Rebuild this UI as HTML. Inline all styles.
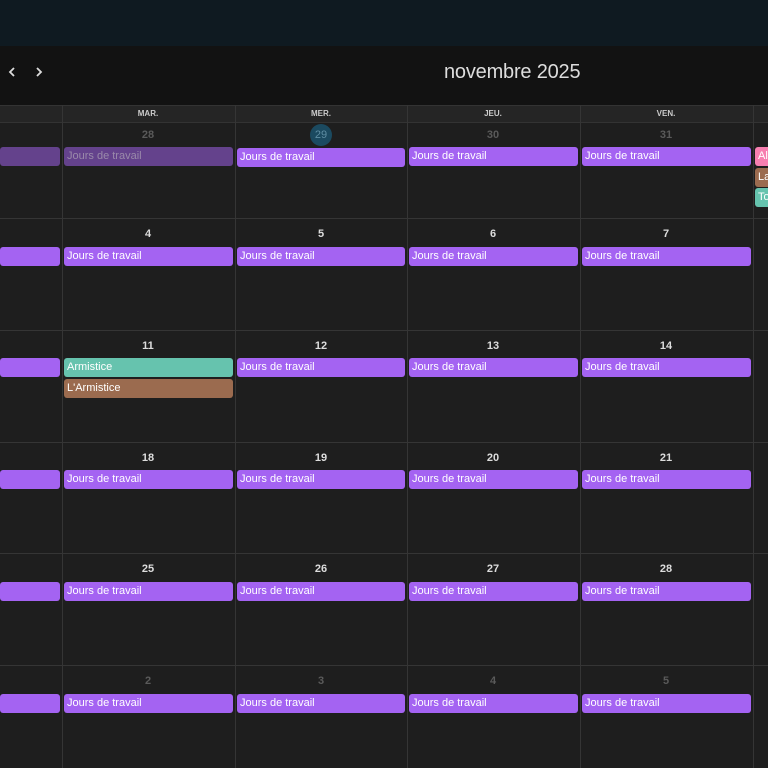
<!DOCTYPE html><html><head><meta charset="utf-8"><style>
*{margin:0;padding:0;box-sizing:border-box}
body{width:768px;height:768px;overflow:hidden;background:#1e1e1e;font-family:"Liberation Sans",sans-serif;position:relative}
.a{position:absolute}
.top{left:0;top:0;width:768px;height:46px;background:#0f1a21}
.hdr{left:0;top:46px;width:768px;height:59px;background:#121212}
.dh{left:0;top:105px;width:768px;height:18px;background:#252525;border-top:1px solid #333;border-bottom:1px solid #333}
.vl{top:105px;width:1px;height:663px;background:#353535}
.hl{left:0;width:768px;height:1px;background:#353535}
.dn{font-size:8px;font-weight:bold;color:#ccc;width:172px;text-align:center}
.n{font-size:11px;color:#ddd;width:172px;text-align:center;font-weight:bold}
.n.o{color:#5a5a5a}
.e{height:19px;border-radius:3px;background:#a463f2;color:#fff;font-size:11px;line-height:19px;padding-left:3px;white-space:nowrap;overflow:hidden}
</style></head><body>
<div class="a top"></div>
<div class="a hdr"></div>
<svg class="a" style="left:5px;top:64px" width="40" height="16"><path d="M9 4 L5 8 L9 12" stroke="#ddd" stroke-width="1.8" fill="none"/><path d="M36 4 L40 8 L36 12" stroke="#ddd" stroke-width="1.8" fill="none" transform="translate(-4 0)"/></svg>
<div class="a" style="left:444px;top:61px;font-size:20px;color:#ddd;letter-spacing:-0.2px">novembre 2025</div>
<div class="a dh"></div>
<div class="a dn" style="left:62px;top:109px">MAR.</div>
<div class="a dn" style="left:235px;top:109px">MER.</div>
<div class="a dn" style="left:407px;top:109px">JEU.</div>
<div class="a dn" style="left:580px;top:109px">VEN.</div>
<div class="a vl" style="left:62px"></div><div class="a vl" style="left:235px"></div><div class="a vl" style="left:407px"></div><div class="a vl" style="left:580px"></div><div class="a vl" style="left:753px"></div>
<div class="a hl" style="top:218px"></div><div class="a hl" style="top:330px"></div><div class="a hl" style="top:442px"></div><div class="a hl" style="top:553px"></div><div class="a hl" style="top:665px"></div>

<div class="a n o" style="left:62px;top:129px">28</div>
<div class="a" style="left:310px;top:124px;width:22px;height:22px;border-radius:50%;background:#1b4a60;color:#5f8ea3;font-size:11px;text-align:center;line-height:22px">29</div>
<div class="a n o" style="left:407px;top:129px">30</div>
<div class="a n o" style="left:580px;top:129px">31</div>
<div class="a e" style="left:0;top:147px;width:60px;background:#64428c"></div>
<div class="a e" style="left:64px;top:147px;width:169px;background:#64428c;color:#9a8aaa">Jours de travail</div>
<div class="a e" style="left:237px;top:148px;width:168px">Jours de travail</div>
<div class="a e" style="left:409px;top:147px;width:169px">Jours de travail</div>
<div class="a e" style="left:582px;top:147px;width:169px">Jours de travail</div>
<div class="a e" style="left:755px;top:147px;width:20px;background:#f77fb0">All</div>
<div class="a e" style="left:755px;top:168px;width:20px;background:#9b6b4f">La</div>
<div class="a e" style="left:755px;top:188px;width:20px;background:#66c3ae">To</div>

<div class="a n" style="left:62px;top:228px">4</div><div class="a n" style="left:235px;top:228px">5</div><div class="a n" style="left:407px;top:228px">6</div><div class="a n" style="left:580px;top:228px">7</div>
<div class="a e" style="left:0;top:247px;width:60px"></div>
<div class="a e" style="left:64px;top:247px;width:169px">Jours de travail</div>
<div class="a e" style="left:237px;top:247px;width:168px">Jours de travail</div>
<div class="a e" style="left:409px;top:247px;width:169px">Jours de travail</div>
<div class="a e" style="left:582px;top:247px;width:169px">Jours de travail</div>

<div class="a n" style="left:62px;top:340px">11</div><div class="a n" style="left:235px;top:340px">12</div><div class="a n" style="left:407px;top:340px">13</div><div class="a n" style="left:580px;top:340px">14</div>
<div class="a e" style="left:0;top:358px;width:60px"></div>
<div class="a e" style="left:64px;top:358px;width:169px;background:#66c3ae">Armistice</div>
<div class="a e" style="left:64px;top:379px;width:169px;background:#9b6b4f">L'Armistice</div>
<div class="a e" style="left:237px;top:358px;width:168px">Jours de travail</div>
<div class="a e" style="left:409px;top:358px;width:169px">Jours de travail</div>
<div class="a e" style="left:582px;top:358px;width:169px">Jours de travail</div>

<div class="a n" style="left:62px;top:452px">18</div><div class="a n" style="left:235px;top:452px">19</div><div class="a n" style="left:407px;top:452px">20</div><div class="a n" style="left:580px;top:452px">21</div>
<div class="a e" style="left:0;top:470px;width:60px"></div>
<div class="a e" style="left:64px;top:470px;width:169px">Jours de travail</div>
<div class="a e" style="left:237px;top:470px;width:168px">Jours de travail</div>
<div class="a e" style="left:409px;top:470px;width:169px">Jours de travail</div>
<div class="a e" style="left:582px;top:470px;width:169px">Jours de travail</div>

<div class="a n" style="left:62px;top:563px">25</div><div class="a n" style="left:235px;top:563px">26</div><div class="a n" style="left:407px;top:563px">27</div><div class="a n" style="left:580px;top:563px">28</div>
<div class="a e" style="left:0;top:582px;width:60px"></div>
<div class="a e" style="left:64px;top:582px;width:169px">Jours de travail</div>
<div class="a e" style="left:237px;top:582px;width:168px">Jours de travail</div>
<div class="a e" style="left:409px;top:582px;width:169px">Jours de travail</div>
<div class="a e" style="left:582px;top:582px;width:169px">Jours de travail</div>

<div class="a n o" style="left:62px;top:675px">2</div><div class="a n o" style="left:235px;top:675px">3</div><div class="a n o" style="left:407px;top:675px">4</div><div class="a n o" style="left:580px;top:675px">5</div>
<div class="a e" style="left:0;top:694px;width:60px"></div>
<div class="a e" style="left:64px;top:694px;width:169px">Jours de travail</div>
<div class="a e" style="left:237px;top:694px;width:168px">Jours de travail</div>
<div class="a e" style="left:409px;top:694px;width:169px">Jours de travail</div>
<div class="a e" style="left:582px;top:694px;width:169px">Jours de travail</div>
</body></html>
